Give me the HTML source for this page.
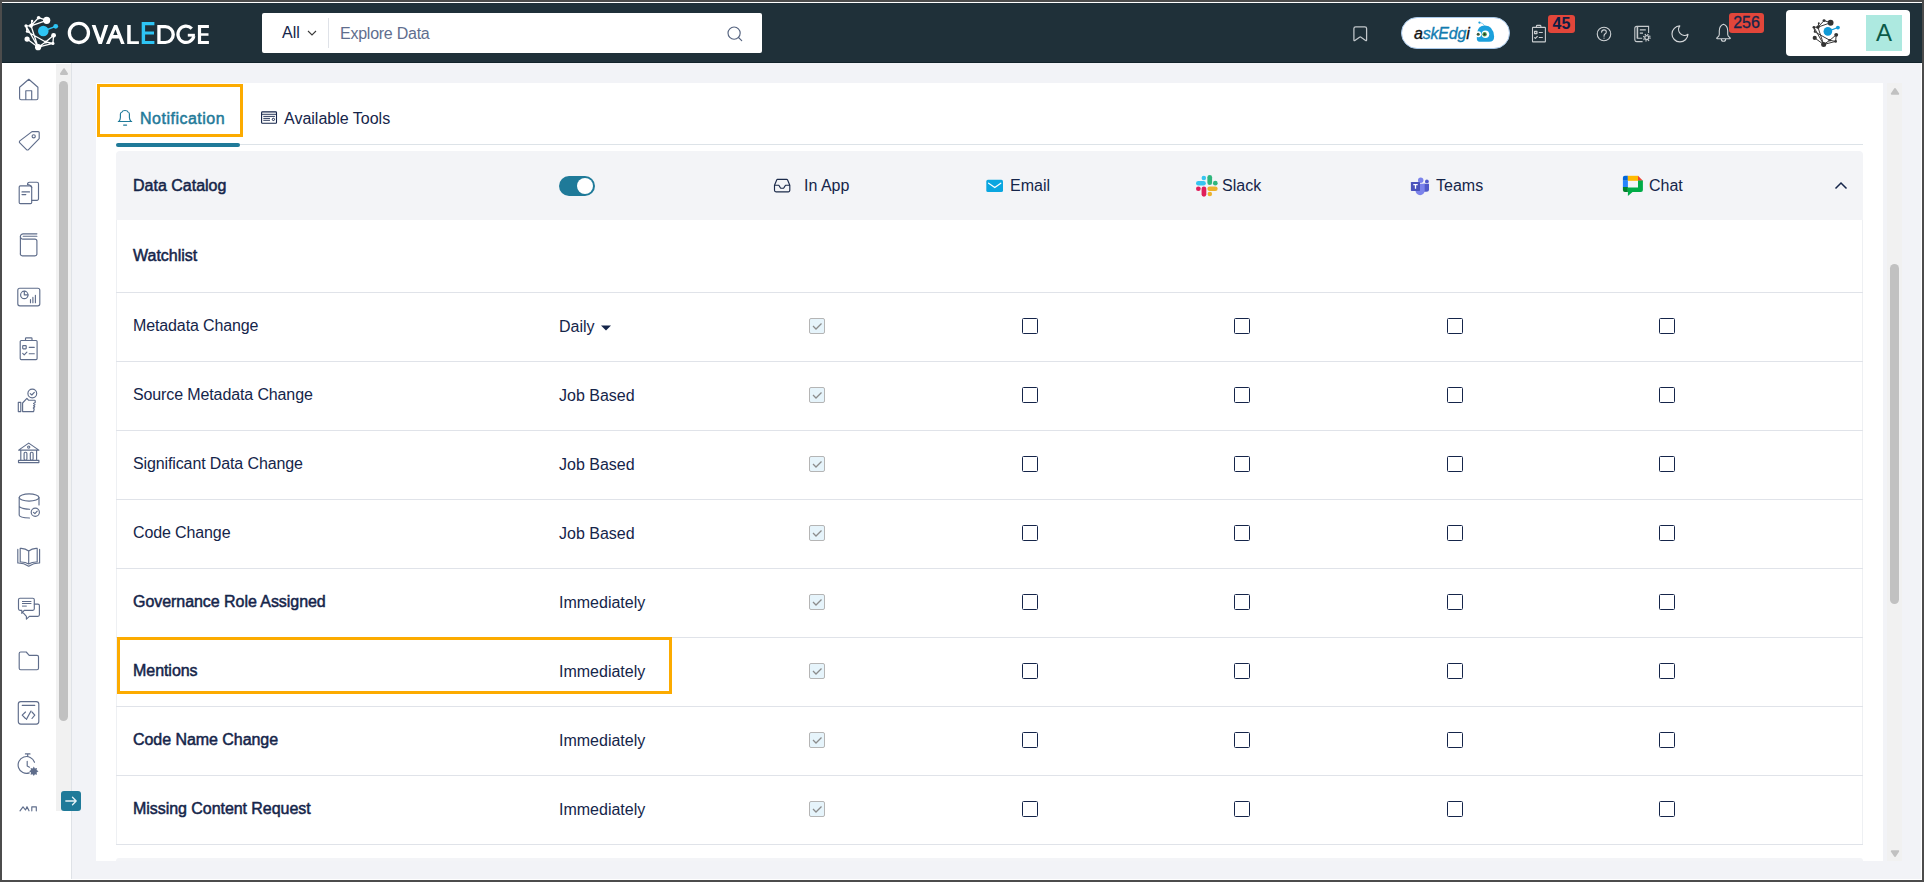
<!DOCTYPE html>
<html><head><meta charset="utf-8"><style>
*{box-sizing:border-box;margin:0;padding:0}
html,body{width:1924px;height:882px;overflow:hidden;background:#4c4c4c;font-family:"Liberation Sans",sans-serif;color:#15254a}
div,span,svg{position:absolute}
.t{white-space:nowrap;font-size:16px;line-height:16px}
.b{-webkit-text-stroke:0.5px currentColor}
.cb{width:16px;height:16px;border:1.5px solid #15254a;border-radius:1.5px}
.cbd{width:16px;height:16px;border:1px solid #b5b5b5;border-radius:2px;background:#e6f4fb}
.cbd svg{left:2px;top:3px}
.hl{height:1px;background:#e0e3e9}
</style></head><body>
<div style="left:2px;top:2px;width:1920px;height:878px;background:#fff"></div>
<div style="left:2px;top:3px;width:1920px;height:60px;background:#1f3039"></div>
<div style="left:2px;top:62px;width:1920px;height:1px;background:#12232b"></div>
<div style="left:72px;top:63px;width:1849px;height:816px;background:#f2f3f7"></div>
<div style="left:71px;top:63px;width:1px;height:816px;background:#dfe2e7"></div>
<div style="left:56px;top:64px;width:15px;height:747px;background:#f1f1f1"></div>
<svg style="left:57.5px;top:66px" width="12" height="10" viewBox="0 0 12 10"><path d="M6 3.2 L9 7.9 L3 7.9 Z" fill="#c1c1c1" stroke="#c1c1c1" stroke-width="2" stroke-linejoin="round"/></svg>
<div style="left:59px;top:81px;width:9px;height:640px;background:#c1c1c1;border-radius:5px"></div>
<div style="left:61px;top:791px;width:20px;height:20px;background:#1f7a99;border-radius:3px"></div>
<svg style="left:61px;top:791px" width="20" height="20" viewBox="0 0 20 20"><path d="M4.8 10 H15.2 M11.5 6.3 L15.2 10 L11.5 13.7" stroke="#e8f4f8" stroke-width="1.3" fill="none" stroke-linecap="round" stroke-linejoin="round"/></svg>
<div style="left:96px;top:83px;width:1787px;height:778px;background:#fff"></div>
<div style="left:116px;top:858px;width:1747px;height:3px;background:#f3f4f7;border-radius:3px 3px 0 0"></div>
<div style="left:1887px;top:83px;width:15px;height:778px;background:#f1f1f1"></div>
<svg style="left:1888.5px;top:86px" width="12" height="10" viewBox="0 0 12 10"><path d="M6 3 L9.2 7.8 L2.8 7.8 Z" fill="#c1c1c1" stroke="#c1c1c1" stroke-width="2" stroke-linejoin="round"/></svg>
<svg style="left:1888.5px;top:848.5px" width="12" height="10" viewBox="0 0 12 10"><path d="M6 7 L9.2 2.2 L2.8 2.2 Z" fill="#c1c1c1" stroke="#c1c1c1" stroke-width="2" stroke-linejoin="round"/></svg>
<div style="left:1890px;top:264px;width:9px;height:340px;background:#c1c1c1;border-radius:5px"></div>
<div style="left:97px;top:84px;width:146px;height:53px;border:3px solid #fcab00"></div>
<svg style="left:112px;top:104px" width="28" height="28" viewBox="0 0 28 28"><path d="M6.3 17.5 H19.7 M7 17.4 Q8.4 15.5 8.4 13.5 V10 Q8.4 8.4 9.9 8.2 Q10.4 6.5 13 6.5 Q15.6 6.5 16.1 8.2 Q17.4 8.4 17.4 10 V13.5 Q17.4 15.5 19 17.4 M11.6 21.1 H14.6" stroke="#1f7a99" stroke-width="1.15" fill="none" stroke-linecap="round" stroke-linejoin="round"/></svg>
<span class="t b" style="left:140px;top:111px;color:#1f7a99;letter-spacing:0.5px">Notification</span>
<svg style="left:255px;top:104px" width="28" height="28" viewBox="0 0 28 28"><g stroke="#15254a" fill="none"><rect x="6.6" y="7.9" width="14.9" height="11.3" rx="0.8" stroke-width="1.1"/><path d="M6.6 10.3 H21.5" stroke-width="0.9"/><path d="M8.7 12.4 H19.5 M8.7 14.4 H14.6 M8.7 16.3 H14.6" stroke-width="0.9" stroke-linecap="round"/><circle cx="18.4" cy="15.4" r="1.15" stroke-width="1"/></g></svg>
<span class="t" style="left:284px;top:111px">Available Tools</span>
<div class="hl" style="left:116px;top:144px;width:1747px;background:#dde3e8"></div>
<div style="left:116px;top:143px;width:124px;height:4px;background:#1f7a99;border-radius:2px"></div>
<div style="left:116px;top:151px;width:1747px;height:69px;background:#f3f4f7;border-radius:4px 4px 0 0"></div>
<span class="t b" style="left:133px;top:178px">Data Catalog</span>
<div style="left:559px;top:176px;width:36px;height:20px;background:#1f7a99;border-radius:10px"></div>
<div style="left:577px;top:178px;width:16px;height:16px;background:#fff;border-radius:8px"></div>
<svg style="left:764px;top:170px" width="40" height="32" viewBox="0 0 40 32"><path d="M13.4 9.4 H22.6 Q23.3 9.4 23.6 10 L25.8 15.2 V20.3 A1.5 1.5 0 0 1 24.3 21.8 H12 A1.5 1.5 0 0 1 10.5 20.3 V15.2 L12.7 10 Q13 9.4 13.4 9.4 Z M10.5 15.2 H14.8 L16.3 17.6 Q16.7 18.2 17.3 18.2 H19 Q19.6 18.2 20 17.6 L21.5 15.2 H25.8" stroke="#1b2a4a" stroke-width="1.15" fill="none" stroke-linejoin="round"/></svg>
<span class="t" style="left:804px;top:178px">In App</span>
<svg style="left:976px;top:170px" width="40" height="32" viewBox="0 0 40 32"><rect x="10.3" y="9.8" width="16.7" height="12.3" rx="1.6" fill="#0aa6e0"/><path d="M12.6 13.2 L18.8 17.6 L24.8 13.2" stroke="#fff" stroke-width="1.2" fill="none" stroke-linecap="round"/></svg>
<span class="t" style="left:1010px;top:178px">Email</span>
<svg style="left:1196px;top:175px" width="22" height="22" viewBox="0 0 20.5 20.5">
<rect x="0" y="5.5" width="9.2" height="4.4" rx="2.2" fill="#36c5f0"/><rect x="5.2" y="0.6" width="4.2" height="4.2" rx="2.1" fill="#36c5f0"/>
<rect x="10.6" y="0" width="4.4" height="9.4" rx="2.2" fill="#2eb67d"/><rect x="15.8" y="5.4" width="4.4" height="4.4" rx="2.2" fill="#2eb67d"/>
<rect x="10.6" y="10.6" width="9.6" height="4.4" rx="2.2" fill="#ecb22e"/><rect x="10.8" y="15.6" width="4.2" height="4.2" rx="2.1" fill="#ecb22e"/>
<rect x="5.2" y="10.6" width="4.4" height="9.6" rx="2.2" fill="#e01e5a"/><rect x="0" y="10.8" width="4.4" height="4.2" rx="2.1" fill="#e01e5a"/>
</svg>
<span class="t" style="left:1222px;top:178px">Slack</span>
<svg style="left:1400px;top:168px" width="40" height="32" viewBox="0 0 40 32">
<circle cx="26.9" cy="13.4" r="1.9" fill="#5059c9"/><path d="M23.5 15.8 H29 V21.3 A2.5 2.5 0 0 1 26.5 23.8 H23.5 Z" fill="#5059c9"/>
<circle cx="20.7" cy="12.3" r="2.7" fill="#7b83eb"/><path d="M15.5 15.8 H24.7 V22.6 A4.6 4.6 0 0 1 15.5 22.6 Z" fill="#7b83eb"/>
<rect x="10.9" y="14" width="9.1" height="8.9" rx="0.6" fill="#4b53bc"/><path d="M13.3 16.6 H17.7 M15.5 16.6 V20.8" stroke="#fff" stroke-width="1.3"/>
</svg>
<span class="t" style="left:1436px;top:178px">Teams</span>
<svg style="left:1612px;top:168px" width="40" height="32" viewBox="0 0 40 32">
<path d="M12.9 7.8 H15.9 V12.8 H10.9 V9.8 A2 2 0 0 1 12.9 7.8 Z" fill="#0066da"/>
<rect x="10.9" y="12.7" width="5" height="6.5" fill="#2684fc"/>
<path d="M10.9 19.1 H15.9 V24 H12.9 A2 2 0 0 1 10.9 22 Z" fill="#00832d"/>
<rect x="15.8" y="7.8" width="10.3" height="5" fill="#ffba00"/>
<path d="M26 7.8 L30.9 12.7 H26 Z" fill="#ea4335"/>
<path d="M26 12.6 H30.9 V22 A2 2 0 0 1 28.9 24 H20.5 L15.9 28 V19.4 H26 Z" fill="#00ac47"/>
</svg>
<span class="t" style="left:1649px;top:178px">Chat</span>
<svg style="left:1834px;top:180px" width="14" height="10" viewBox="0 0 14 10"><path d="M1.5 8.5 L7 3 L12.5 8.5" stroke="#15254a" stroke-width="1.5" fill="none"/></svg>
<div style="left:116px;top:220px;width:1px;height:624px;background:#eef0f3"></div>
<div style="left:1862px;top:220px;width:1px;height:624px;background:#eef0f3"></div>
<span class="t b" style="left:133px;top:248px">Watchlist</span>
<div class="hl" style="left:116px;top:292px;width:1747px"></div>
<div class="hl" style="left:116px;top:361px;width:1747px"></div>
<div class="hl" style="left:116px;top:430px;width:1747px"></div>
<div class="hl" style="left:116px;top:499px;width:1747px"></div>
<div class="hl" style="left:116px;top:568px;width:1747px"></div>
<div class="hl" style="left:116px;top:637px;width:1747px"></div>
<div class="hl" style="left:116px;top:706px;width:1747px"></div>
<div class="hl" style="left:116px;top:775px;width:1747px"></div>
<div class="hl" style="left:116px;top:844px;width:1747px"></div>
<span class="t" style="left:133px;top:317.5px;letter-spacing:-0.12px">Metadata Change</span>
<span class="t" style="left:559px;top:319.0px">Daily</span>
<svg style="left:601px;top:325px" width="10" height="6" viewBox="0 0 10 6"><path d="M0 0.5 H10 L5 5.5 Z" fill="#15254a"/></svg>
<div class="cbd" style="left:809px;top:318px"><svg width="10" height="8" viewBox="0 0 10 8"><path d="M1 4 L4 7 L9.5 1.5" stroke="#8c8c8c" stroke-width="1.3" fill="none"/></svg></div>
<div class="cb" style="left:1022px;top:318px"></div>
<div class="cb" style="left:1234px;top:318px"></div>
<div class="cb" style="left:1447px;top:318px"></div>
<div class="cb" style="left:1659px;top:318px"></div>
<span class="t" style="left:133px;top:386.5px;letter-spacing:-0.12px">Source Metadata Change</span>
<span class="t" style="left:559px;top:388.0px">Job Based</span>
<div class="cbd" style="left:809px;top:387px"><svg width="10" height="8" viewBox="0 0 10 8"><path d="M1 4 L4 7 L9.5 1.5" stroke="#8c8c8c" stroke-width="1.3" fill="none"/></svg></div>
<div class="cb" style="left:1022px;top:387px"></div>
<div class="cb" style="left:1234px;top:387px"></div>
<div class="cb" style="left:1447px;top:387px"></div>
<div class="cb" style="left:1659px;top:387px"></div>
<span class="t" style="left:133px;top:455.5px;letter-spacing:-0.12px">Significant Data Change</span>
<span class="t" style="left:559px;top:457.0px">Job Based</span>
<div class="cbd" style="left:809px;top:456px"><svg width="10" height="8" viewBox="0 0 10 8"><path d="M1 4 L4 7 L9.5 1.5" stroke="#8c8c8c" stroke-width="1.3" fill="none"/></svg></div>
<div class="cb" style="left:1022px;top:456px"></div>
<div class="cb" style="left:1234px;top:456px"></div>
<div class="cb" style="left:1447px;top:456px"></div>
<div class="cb" style="left:1659px;top:456px"></div>
<span class="t" style="left:133px;top:524.5px;letter-spacing:-0.12px">Code Change</span>
<span class="t" style="left:559px;top:526.0px">Job Based</span>
<div class="cbd" style="left:809px;top:525px"><svg width="10" height="8" viewBox="0 0 10 8"><path d="M1 4 L4 7 L9.5 1.5" stroke="#8c8c8c" stroke-width="1.3" fill="none"/></svg></div>
<div class="cb" style="left:1022px;top:525px"></div>
<div class="cb" style="left:1234px;top:525px"></div>
<div class="cb" style="left:1447px;top:525px"></div>
<div class="cb" style="left:1659px;top:525px"></div>
<span class="t b" style="left:133px;top:593.5px;letter-spacing:-0.05px">Governance Role Assigned</span>
<span class="t" style="left:559px;top:595.0px">Immediately</span>
<div class="cbd" style="left:809px;top:594px"><svg width="10" height="8" viewBox="0 0 10 8"><path d="M1 4 L4 7 L9.5 1.5" stroke="#8c8c8c" stroke-width="1.3" fill="none"/></svg></div>
<div class="cb" style="left:1022px;top:594px"></div>
<div class="cb" style="left:1234px;top:594px"></div>
<div class="cb" style="left:1447px;top:594px"></div>
<div class="cb" style="left:1659px;top:594px"></div>
<span class="t b" style="left:133px;top:662.5px;letter-spacing:-0.05px">Mentions</span>
<span class="t" style="left:559px;top:664.0px">Immediately</span>
<div class="cbd" style="left:809px;top:663px"><svg width="10" height="8" viewBox="0 0 10 8"><path d="M1 4 L4 7 L9.5 1.5" stroke="#8c8c8c" stroke-width="1.3" fill="none"/></svg></div>
<div class="cb" style="left:1022px;top:663px"></div>
<div class="cb" style="left:1234px;top:663px"></div>
<div class="cb" style="left:1447px;top:663px"></div>
<div class="cb" style="left:1659px;top:663px"></div>
<span class="t b" style="left:133px;top:731.5px;letter-spacing:-0.05px">Code Name Change</span>
<span class="t" style="left:559px;top:733.0px">Immediately</span>
<div class="cbd" style="left:809px;top:732px"><svg width="10" height="8" viewBox="0 0 10 8"><path d="M1 4 L4 7 L9.5 1.5" stroke="#8c8c8c" stroke-width="1.3" fill="none"/></svg></div>
<div class="cb" style="left:1022px;top:732px"></div>
<div class="cb" style="left:1234px;top:732px"></div>
<div class="cb" style="left:1447px;top:732px"></div>
<div class="cb" style="left:1659px;top:732px"></div>
<span class="t b" style="left:133px;top:800.5px;letter-spacing:-0.05px">Missing Content Request</span>
<span class="t" style="left:559px;top:802.0px">Immediately</span>
<div class="cbd" style="left:809px;top:801px"><svg width="10" height="8" viewBox="0 0 10 8"><path d="M1 4 L4 7 L9.5 1.5" stroke="#8c8c8c" stroke-width="1.3" fill="none"/></svg></div>
<div class="cb" style="left:1022px;top:801px"></div>
<div class="cb" style="left:1234px;top:801px"></div>
<div class="cb" style="left:1447px;top:801px"></div>
<div class="cb" style="left:1659px;top:801px"></div>
<div style="left:117px;top:637px;width:555px;height:57px;border:3px solid #fcab00"></div>
<svg style="left:20px;top:12px" width="42" height="42" viewBox="0 0 42 42"><path d="M18.6 5.7 L26.7 8.3 M18.6 5.7 L11 13.8 M11 13.8 L26.7 8.3 M12.1 9 L11 13.8 M6 13.8 L11 13.8 M6 13.8 L7.1 19.5 M11 13.8 L18.1 35.2 M7.1 19.5 L25.7 30 M7.1 27.1 L18.1 35.2 M18.1 35.2 L25.7 30 M18.1 35.2 L32.9 31.4 M25.7 30 L33.6 23.3 M33.6 23.3 L32.9 31.4 M25.7 30 L32.9 31.4 M6 13.8 L18.1 35.2" stroke="#fff" stroke-width="1.3" fill="none"/><g fill="#fff"><circle cx="26.7" cy="8.3" r="3.6"/><circle cx="18.6" cy="5.7" r="1.8"/><circle cx="12.1" cy="9" r="1.2"/><circle cx="6" cy="13.8" r="1.6"/><circle cx="11" cy="13.8" r="2"/><circle cx="7.1" cy="19.5" r="1.3"/><circle cx="7.1" cy="27.1" r="2.6"/><circle cx="18.1" cy="35.2" r="3.1"/><circle cx="33.6" cy="23.3" r="2.4"/><circle cx="32.9" cy="31.4" r="1.6"/><circle cx="25.7" cy="30" r="1.6"/></g><path d="M23.3 19 L35.7 14.3" stroke="#2ec5f5" stroke-width="1.4"/><circle cx="23.3" cy="19" r="5.3" fill="#2ec5f5"/><circle cx="35.7" cy="14.3" r="2.4" fill="#2ec5f5"/></svg>
<svg style="left:0;top:0" width="220" height="60" viewBox="0 0 220 60"><g fill="#fff">
<circle cx="78.9" cy="32.95" r="9.55" stroke="#fff" stroke-width="3.3" fill="none"/>
<path d="M91.7 25.1 L95.5 25.1 L100.3 38.3 L104.6 25.1 L108.3 25.1 L101.9 44.1 L98.6 44.1 Z"/>
<path fill-rule="evenodd" d="M105.9 44.1 L114.1 25.1 L117.2 25.1 L124.7 44.1 L121.1 44.1 L119 38.6 L111.9 38.6 L109.6 44.1 Z M113.2 35.1 L117.6 35.1 L115.5 29.6 Z"/>
<path d="M127.2 25.1 H130.7 V41.2 H138.9 V44.1 H127.2 Z"/>
<path fill-rule="evenodd" d="M157.3 25.1 H165.4 A9.5 9.5 0 0 1 165.4 44.1 H157.3 Z M160.6 28.2 H165.2 A6.35 6.35 0 0 1 165.2 40.9 H160.6 Z"/>
<path d="M191.8 28.6 A8.1 8.1 0 1 0 193.9 36.2" stroke="#fff" stroke-width="3.2" fill="none"/>
<rect x="187.8" y="33.8" width="7.1" height="2.8"/>
<path d="M197.9 25.1 H208.9 V27.9 H201.1 V33.2 H208.5 V35.8 H201.1 V41.1 H208.9 V44.1 H197.9 Z"/>
</g>
<path fill="#2ec5f5" d="M141.7 22 H154.4 V25.2 H145.1 V31.6 H154 V34.6 H145.1 V40.9 H154.4 V44.1 H141.7 Z"/>
</svg>
<div style="left:262px;top:13px;width:500px;height:40px;background:#fff;border-radius:2px"></div>
<span class="t" style="left:282px;top:25px;color:#15254a">All</span>
<svg style="left:307px;top:30px" width="10" height="7" viewBox="0 0 10 7"><path d="M1 1 L5 5 L9 1" stroke="#3a3a3a" stroke-width="1.1" fill="none"/></svg>
<div style="left:328px;top:18px;width:1px;height:30px;background:#dfe2e8"></div>
<span class="t" style="left:340px;top:26px;color:#5f6e8e;letter-spacing:-0.25px">Explore Data</span>
<svg style="left:720px;top:18px" width="30" height="30" viewBox="0 0 30 30"><g stroke="#55637f" stroke-width="1.15" fill="none"><circle cx="14.1" cy="15.1" r="6.1"/><path d="M18.5 19.5 L21.7 22.7" stroke-linecap="round"/></g></svg>
<svg style="left:1345px;top:18px" width="30" height="30" viewBox="0 0 30 30"><path d="M8.9 21.9 V10.6 A1.8 1.8 0 0 1 10.7 8.8 H19.8 A1.8 1.8 0 0 1 21.6 10.6 V21.9 Q21.6 23.1 20.6 22.4 L16 19.2 Q15.25 18.7 14.5 19.2 L9.9 22.4 Q8.9 23.1 8.9 21.9 Z" stroke="#c3c8cc" stroke-width="1.25" fill="none" stroke-linejoin="round"/></svg>
<div style="left:1401px;top:17px;width:109px;height:32px;background:#fff;border-radius:16px;border:1.5px solid #a9c9ea"></div>
<span style="left:1414px;top:26px;font-size:16px;line-height:16px;font-style:italic;white-space:nowrap;color:#111;-webkit-text-stroke:0.35px currentColor;letter-spacing:-0.2px"><span style="position:static">a</span><span style="position:static;color:#127cb0">skEdg</span><span style="position:static">i</span></span>
<svg style="left:1470px;top:18px" width="30" height="28" viewBox="0 0 30 28">
<path d="M9.5 4.6 Q13 4.5 14.5 7.8" stroke="#7cc8ec" stroke-width="0.9" fill="none"/><circle cx="9.4" cy="4.6" r="1.1" fill="#1ba0dc"/>
<path d="M7 16 Q7.5 7.6 15 7.6 Q23.5 8 24.1 18.5 Q24.3 23.8 19 23.8 H9.5 Q6.8 23.8 6.8 20 Z" fill="#1ba0dc"/>
<circle cx="8.3" cy="16.3" r="3" fill="#fff"/><circle cx="15.4" cy="16.3" r="3.8" fill="#fff"/>
<circle cx="8.2" cy="16.3" r="1.5" fill="#3c5a3c"/><circle cx="14.6" cy="16.3" r="2.2" fill="#4a9a4a"/><circle cx="14.6" cy="16.3" r="1.1" fill="#2a2a2a"/>
</svg>
<svg style="left:1526px;top:18px" width="30" height="30" viewBox="0 0 30 30"><g stroke="#c9cdd0" fill="none" stroke-width="1.1" stroke-linejoin="round"><rect x="6.5" y="9.4" width="12.9" height="14.5" rx="0.5"/><path d="M10.4 9.4 V8.3 Q10.4 7.4 11.3 7.4 H14 Q14.9 7.4 14.9 8.3 V9.4"/><rect x="8.6" y="13.3" width="2.3" height="2.3" stroke-width="1.3"/><path d="M12.8 14.5 H16.8 M12.8 19.5 H16.8 M8.3 19.3 L9.4 20.4 L11.6 18.2" stroke-width="1.2"/></g></svg>
<div style="left:1548px;top:15px;width:27px;height:18px;background:#e2463a;border-radius:3px"></div>
<span style="left:1548px;top:14.5px;width:27px;text-align:center;font-size:16px;line-height:18px;font-weight:bold;color:#0f1d45">45</span>
<svg style="left:1590px;top:20px" width="30" height="28" viewBox="0 0 30 28"><g stroke="#cfd3d6" fill="none" stroke-width="1.1"><circle cx="14" cy="14" r="6.75"/><path d="M11.6 12.1 Q11.8 9.9 14 9.9 Q16.3 9.9 16.3 11.9 Q16.3 13.2 14.9 14 Q14 14.6 14 16.2" stroke-linecap="round"/></g><rect x="13.4" y="17.7" width="1.2" height="0.9" fill="#cfd3d6"/></svg>
<svg style="left:1630px;top:22px" width="24" height="24" viewBox="0 0 24 24"><g stroke="#c6cacd" fill="none" stroke-width="1.1"><path d="M4.8 18 V6.4 A2 2 0 0 1 6.8 4.4 H18.6 V11"/><path d="M7.4 4.7 V16.2" stroke-width="1.6"/><path d="M4.8 17.9 A2 2 0 0 0 6.8 19.6 H12.6 M6.8 16.3 H12.2"/><path d="M9.8 7.9 H15.8 M9.8 11.1 H13" stroke-width="1.2"/><circle cx="16.8" cy="15.6" r="2" stroke-width="1.3"/><circle cx="16.8" cy="15.6" r="3.3" stroke-width="1.2" stroke-dasharray="1.3 1.3"/></g></svg>
<svg style="left:1665px;top:18px" width="30" height="30" viewBox="0 0 30 30"><path d="M14.82 7.91 A8 8 0 1 0 22.98 16.25 A5.9 5.9 0 0 1 14.82 7.91 Z" stroke="#d3d6d9" stroke-width="1.15" fill="none" stroke-linejoin="round"/></svg>
<svg style="left:1700px;top:18px" width="40" height="30" viewBox="0 0 40 30"><path d="M23.5 6.2 C21 7 19.3 9 19.3 12.8 V16.6 Q19.3 18.3 17.3 19.5 Q16 20.6 17.4 20.7 H29.6 Q31 20.6 29.7 19.5 Q27.7 18.3 27.7 16.6 V12.8 C27.7 9 26 7 23.5 6.2 Z M21.3 20.9 A2.2 2.3 0 0 0 25.7 20.9" stroke="#d0d4d7" stroke-width="1.1" fill="none" stroke-linejoin="round"/></svg>
<div style="left:1729px;top:13px;width:35px;height:20px;background:#e2463a;border-radius:3px"></div>
<span style="left:1729px;top:12px;width:35px;text-align:center;font-size:16px;line-height:21px;color:#15254a;-webkit-text-stroke:0.3px currentColor">256</span>
<div style="left:1786px;top:10px;width:124px;height:46px;background:#fff;border-radius:4px"></div>
<svg style="left:1809px;top:16px" width="34" height="34" viewBox="0 0 42 42"><path d="M18.6 5.7 L26.7 8.3 M18.6 5.7 L11 13.8 M11 13.8 L26.7 8.3 M12.1 9 L11 13.8 M6 13.8 L11 13.8 M6 13.8 L7.1 19.5 M11 13.8 L18.1 35.2 M7.1 19.5 L25.7 30 M7.1 27.1 L18.1 35.2 M18.1 35.2 L25.7 30 M18.1 35.2 L32.9 31.4 M25.7 30 L33.6 23.3 M33.6 23.3 L32.9 31.4 M25.7 30 L32.9 31.4 M6 13.8 L18.1 35.2" stroke="#333" stroke-width="1.2" fill="none"/><g fill="#333"><circle cx="26.7" cy="8.3" r="3.6"/><circle cx="18.6" cy="5.7" r="1.8"/><circle cx="12.1" cy="9" r="1.2"/><circle cx="6" cy="13.8" r="1.6"/><circle cx="11" cy="13.8" r="2"/><circle cx="7.1" cy="19.5" r="1.3"/><circle cx="7.1" cy="27.1" r="2.6"/><circle cx="18.1" cy="35.2" r="3.1"/><circle cx="33.6" cy="23.3" r="2.4"/><circle cx="32.9" cy="31.4" r="1.6"/><circle cx="25.7" cy="30" r="1.6"/></g><path d="M23.3 19 L35.7 14.3" stroke="#0f9ad6" stroke-width="1.4"/><circle cx="23.3" cy="19" r="5.3" fill="#0f9ad6"/><circle cx="35.7" cy="14.3" r="2.4" fill="#0f9ad6"/></svg>
<div style="left:1866px;top:15px;width:36px;height:36px;background:#ade9e0"></div>
<span style="left:1866px;top:15px;width:36px;text-align:center;font-size:24px;line-height:36px;color:#0b5a48">A</span>
<svg style="left:0;top:0" width="56" height="830" viewBox="0 0 56 830"><g stroke="#5f6d8b" stroke-width="1.15" fill="none" stroke-linejoin="round" stroke-linecap="round">
<path d="M19.6 87.2 L28.8 79.3 L37.9 87.2 V98.2 A1.5 1.5 0 0 1 36.4 99.7 H21.1 A1.5 1.5 0 0 1 19.6 98.2 Z M25.8 99.7 V90.7 H31.7 V99.7"/>
<path d="M32 131.6 H38.2 A1 1 0 0 1 39.2 132.6 V138.6 L28.5 149.6 A1.4 1.4 0 0 1 26.5 149.6 L19.8 142.9 A1.4 1.4 0 0 1 19.8 140.9 Z"/><circle cx="33.7" cy="136.3" r="1.6"/>
<path d="M27.5 184.5 Q27.5 182.2 29.5 182.2 H37 A1.5 1.5 0 0 1 38.5 183.7 V198.8 A1.5 1.5 0 0 1 37 200.3 H31.7"/><rect x="19.2" y="185.9" width="12.5" height="17.7" rx="1.2"/><path d="M27.5 184.5 Q30.8 184.6 31.7 187.5 M22 191.9 H29.5 M22 194.6 H25.8"/>
<path d="M20.4 254 V236.6 A2.8 2.8 0 0 1 23.2 233.8 H36.9 M23.2 236.2 H36.9"/><path d="M20.4 236.6 A2.5 2.5 0 0 0 22.9 239.1 H34.9 A2 2 0 0 1 36.9 241.1 V253.9 A2 2 0 0 1 34.9 255.9 H22.4 A2 2 0 0 1 20.4 253.9"/>
<rect x="17.8" y="288.2" width="22" height="17.6" rx="2"/><circle cx="24.3" cy="294.9" r="3.7"/><path d="M24.3 291.2 V294.9 H28 M30.5 302.7 V299.6 M32.9 302.7 V297.4 M35.4 302.7 V295.4"/>
<rect x="20.2" y="340.5" width="16.9" height="19.1" rx="1"/><path d="M25.5 340.5 V338.6 Q25.5 337.9 26.2 337.9 H31.3 Q32 337.9 32 338.6 V340.5"/><rect x="22.7" y="345.6" width="3.5" height="3.2" rx="0.5"/><path d="M29.2 347.3 H34.3 M29.2 353.7 H34.3 M22.7 353.4 L24.2 354.9 L26.9 352.1"/>
<circle cx="32.3" cy="393.5" r="4.4"/><path d="M30.3 393.6 L31.8 395 L34.3 392.3"/><rect x="18.3" y="402.3" width="2.5" height="9.3"/><path d="M22.6 411.6 V403 L26.9 398.3 L28.5 400.2 H34.6 Q35.2 400.2 35.2 401 V402.6 L33.6 403.6 L35 404.6 L33.6 405.8 L34.7 406.8 L33.3 408 L34.2 409 L33.6 411.6 Z"/>
<path d="M18.6 450.1 L28.7 443.1 L38.9 450.1 Z M20.8 450.8 V460.3 M36.6 450.8 V460.3 M18.5 460.4 H38.9 V462.6 H18.5 Z"/><circle cx="28.7" cy="447.1" r="1.1"/><rect x="24.1" y="452.2" width="2.8" height="8" rx="1.2"/><rect x="30.3" y="452.2" width="2.8" height="8" rx="1.2"/>
<ellipse cx="29.1" cy="497.5" rx="9.9" ry="3.6"/><path d="M19.2 497.5 V515.2 Q19.5 517.5 29.5 518 M39 497.5 V505 M19.2 506.3 Q20.5 508.9 29.6 509.3"/><circle cx="35.3" cy="512.3" r="4.1"/><path d="M33.5 512.4 L34.9 513.7 L37.2 511.2"/>
<path d="M28.7 551 Q25 548 20.2 548.4 V562 Q25 561.7 28.7 564 Q32.4 561.7 37.2 562 V548.4 Q32.4 548 28.7 551 Z M28.7 551 V564"/><path d="M17.8 549.4 V563 Q23.5 562.8 28.7 566.2 Q34 562.8 39.6 563 V549.4"/>
<path d="M20 598.2 H32.8 A1.5 1.5 0 0 1 34.3 599.7 V608.8 A1.5 1.5 0 0 1 32.8 610.3 H24.2 L21.8 613.4 V610.3 H20 A1.5 1.5 0 0 1 18.5 608.8 V599.7 A1.5 1.5 0 0 1 20 598.2 Z"/><path d="M22.4 601.5 H31 M22.4 603.5 H31 M22.4 606.1 H26.4" stroke-width="1"/><path d="M34.3 604.1 H37.9 A1.5 1.5 0 0 1 39.4 605.6 V614.8 A1.5 1.5 0 0 1 37.9 616.3 H29.4 L26.4 619.1 V616.3 L23.5 613.2"/>
<path d="M19.2 653.5 A1.5 1.5 0 0 1 20.7 652 H26.2 L29.2 655.3 H37 A1.5 1.5 0 0 1 38.5 656.8 V668.2 A1.5 1.5 0 0 1 37 669.7 H20.7 A1.5 1.5 0 0 1 19.2 668.2 Z"/>
<rect x="18.3" y="701.6" width="20.5" height="22.5" rx="2.5"/><path d="M22.2 705.3 H34.8 M25.5 712 L22.2 715.2 L25.5 718.5 M31 711 L26.4 719.4 M32 712 L34.8 715.2 L32 718.5"/>
<path d="M34.5 762.3 A8.4 8.4 0 1 0 29.3 772.9 M25.4 753.9 H30 M27.7 753.9 V756 M27.2 761.3 V766 L29.5 767.2"/>
<path d="M20 810.8 L23 806.8 L25.5 810 L27 806.7 L29 810.8 M31.8 810.8 V806.8 H36.3 V810.8"/>
</g>
<path fill="#5f6d8b" d="M33.8 766.6 L34.9 768.4 L37 767.9 L36.6 770 L38.5 771.3 L36.6 772.6 L37 774.7 L34.9 774.2 L33.8 776 L32.7 774.2 L30.6 774.7 L31 772.6 L29.1 771.3 L31 770 L30.6 767.9 L32.7 768.4 Z"/>
</svg>
</body></html>
